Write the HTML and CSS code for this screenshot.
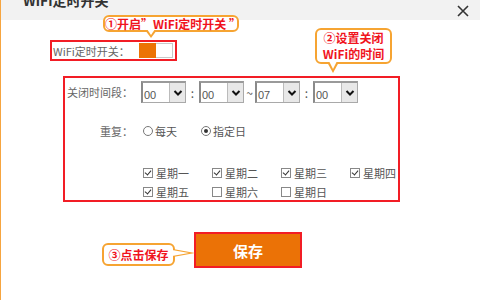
FILE: index.html
```html
<!DOCTYPE html>
<html lang="zh-CN">
<head>
    <meta charset="UTF-8">
    <title>WiFi定时开关</title>
    <link rel="stylesheet" href="styles.css">
</head>
<body>
    <div class="dialog">
        <!-- Tiêu đề hộp thoại -->
        <div class="dialog-head">
            <h1>WiFi定时开关</h1>
            <span class="close">
                <svg width="12" height="12" viewBox="0 0 12 12"><path d="M1 1 L11 11 M11 1 L1 11" stroke="#333" stroke-width="1.6" fill="none"/></svg>
            </span>
        </div>

        <div class="dialog-body">
            <!-- Công tắc -->
            <div class="switch-row mark">
                <span class="switch-label">WiFi定时开关：</span>
                <span class="toggle"></span>
            </div>

            <!-- Khung thời gian -->
            <div class="time-box mark">
                <div class="row">
                    <span class="label">关闭时间段：</span>
                    <div class="fake-select"><span>00</span><i class="arrow"><svg width="10" height="8" viewBox="0 0 10 8"><path d="M1.5 2 L5 5.5 L8.5 2" stroke="#111" stroke-width="2" fill="none"/></svg></i></div>
                    <span class="sep">:</span>
                    <div class="fake-select"><span>00</span><i class="arrow"><svg width="10" height="8" viewBox="0 0 10 8"><path d="M1.5 2 L5 5.5 L8.5 2" stroke="#111" stroke-width="2" fill="none"/></svg></i></div>
                    <span class="sep tilde">~</span>
                    <div class="fake-select"><span>07</span><i class="arrow"><svg width="10" height="8" viewBox="0 0 10 8"><path d="M1.5 2 L5 5.5 L8.5 2" stroke="#111" stroke-width="2" fill="none"/></svg></i></div>
                    <span class="sep">:</span>
                    <div class="fake-select"><span>00</span><i class="arrow"><svg width="10" height="8" viewBox="0 0 10 8"><path d="M1.5 2 L5 5.5 L8.5 2" stroke="#111" stroke-width="2" fill="none"/></svg></i></div>
                </div>

                <div class="row repeat">
                    <span class="label">重复：</span>
                    <span class="radio"><i class="dot"></i>每天</span>
                    <span class="radio on"><i class="dot"></i>指定日</span>
                </div>

                <div class="days">
                    <span class="check on"><i class="box"></i>星期一</span>
                    <span class="check on"><i class="box"></i>星期二</span>
                    <span class="check on"><i class="box"></i>星期三</span>
                    <span class="check on"><i class="box"></i>星期四</span>
                    <span class="check on"><i class="box"></i>星期五</span>
                    <span class="check"><i class="box"></i>星期六</span>
                    <span class="check"><i class="box"></i>星期日</span>
                </div>
            </div>

            <button class="save">保存</button>
        </div>

        <!-- Chú thích -->
        <div class="tip tip-1">①开启”WiFi定时开关 ”</div>
        <div class="tip tip-2">②设置关闭<br>WiFi的时间</div>
        <div class="tip tip-3">③点击保存</div>
    </div>
</body>
</html>
```

FILE: styles.css
```css
body {
    margin: 0;
    font-family: "Noto Sans CJK SC", "Liberation Sans", sans-serif;
    background: #fff;
}

.dialog {
    position: relative;
    width: 480px;
    height: 300px;
    box-sizing: border-box;
    border-left: 1px solid #f6a540;
    overflow: hidden;
}

/* Tiêu đề */
.dialog-head {
    display: flow-root;
    height: 20px;
    background: #f2f2f2;
}

.dialog-head h1 {
    margin: -10px 0 0 22px;
    font-size: 14px;
    line-height: 20px;
    color: #333;
    font-weight: bold;
}

.close {
    position: absolute;
    top: -2px;
    right: 11px;
}

/* Khung đỏ */
.mark {
    border: 2px solid #f21d25;
    box-sizing: border-box;
}

.switch-row {
    display: flex;
    align-items: center;
    width: 127px;
    height: 21px;
    margin: 20px 0 0 49px;
    padding-left: 1px;
}

.switch-label {
    font-size: 11px;
    color: #666;
}

.toggle {
    margin-left: auto;
    margin-right: 2px;
    width: 34px;
    height: 15px;
    box-sizing: border-box;
    border: 1px solid #c8c8c8;
    background: #fff;
    position: relative;
}

.toggle::before {
    content: "";
    position: absolute;
    left: -1px;
    top: -1px;
    width: 17px;
    height: 15px;
    background: #ec7304;
}

.time-box {
    width: 337px;
    height: 126px;
    margin: 15px 0 0 62px;
    padding-top: 3px;
}

.row {
    display: flex;
    align-items: center;
    height: 22px;
}

.label {
    width: 68px;
    margin-right: 8px;
    text-align: right;
    font-size: 11px;
    color: #666;
    white-space: nowrap;
}

.fake-select {
    display: flex;
    width: 45px;
    height: 22px;
    box-sizing: border-box;
    border: 1px solid #a9a9a9;
    border-left: 2px solid #8a8a8a;
    border-top: 2px solid #9a9a9a;
    background: #fff;
}

.fake-select span {
    flex: 1;
    font-family: "Liberation Sans", sans-serif;
    font-size: 11px;
    color: #555;
    padding: 5px 0 0 1px;
    line-height: 14px;
}

.arrow {
    width: 15px;
    display: flex;
    align-items: center;
    justify-content: center;
    background: #e8e8e8;
    border-left: 1px solid #bbb;
}

.sep {
    width: 13px;
    text-align: center;
    font-size: 12px;
    color: #555;
}

.tilde {
    width: 11px;
}

.repeat {
    height: 16px;
    margin-top: 20px;
}

.radio, .check {
    display: flex;
    align-items: center;
    font-size: 11px;
    color: #555;
}

.radio {
    margin-left: 2px;
}

.radio + .radio {
    margin-left: 24px;
}

.dot {
    width: 10px;
    height: 10px;
    box-sizing: border-box;
    border: 1px solid #777;
    border-radius: 50%;
    margin-right: 2px;
    position: relative;
}

.radio.on .dot::after {
    content: "";
    position: absolute;
    left: 2px;
    top: 2px;
    width: 4px;
    height: 4px;
    border-radius: 50%;
    background: #333;
}

.days {
    display: grid;
    grid-template-columns: repeat(4, 69px);
    grid-auto-rows: 16px;
    row-gap: 3px;
    margin: 26px 0 0 78px;
}

.box {
    width: 10px;
    height: 10px;
    box-sizing: border-box;
    border: 1px solid #888;
    margin-right: 3px;
    position: relative;
}

.check.on .box::after {
    content: "";
    position: absolute;
    left: 2px;
    top: 0px;
    width: 3px;
    height: 5px;
    border: solid #333;
    border-width: 0 1.5px 1.5px 0;
    transform: rotate(40deg);
}

/* Nút lưu */
.save {
    display: block;
    width: 108px;
    height: 36px;
    margin: 30px 0 0 193px;
    background: #eb7206;
    border: 2px solid #f21d25;
    color: #fff;
    font-family: "Noto Sans CJK SC", sans-serif;
    font-size: 15px;
    font-weight: bold;
    padding: 0;
}

/* Chú thích */
.tip {
    position: absolute;
    box-sizing: border-box;
    border: 2px solid #f6a432;
    border-radius: 6px;
    background: #fff;
    color: #f0141e;
    font-size: 12px;
    font-weight: bold;
    text-align: center;
    white-space: nowrap;
}

.tip::before, .tip::after {
    content: "";
    position: absolute;
    width: 0;
    height: 0;
    border-style: solid;
}

.tip-1 {
    left: 102px;
    top: 15px;
    width: 136px;
    height: 17px;
    line-height: 13px;
}

.tip-1::before {
    left: 40px;
    top: 100%;
    border-width: 8px 6px 0 6px;
    border-color: #f6a432 transparent transparent transparent;
}

.tip-1::after {
    left: 42px;
    top: calc(100% - 1px);
    border-width: 6px 4px 0 4px;
    border-color: #fff transparent transparent transparent;
}

.tip-2 {
    left: 314px;
    top: 28px;
    width: 77px;
    height: 36px;
    line-height: 16px;
}

.tip-2::before {
    left: 10px;
    top: 100%;
    border-width: 11px 6px 0 6px;
    border-color: #f6a432 transparent transparent transparent;
}

.tip-2::after {
    left: 12px;
    top: calc(100% - 1px);
    border-width: 8px 4px 0 4px;
    border-color: #fff transparent transparent transparent;
}

.tip-3 {
    left: 101px;
    top: 243px;
    width: 73px;
    height: 23px;
    line-height: 19px;
}

.tip-3::before {
    left: 100%;
    top: 4px;
    border-width: 4px 0 4px 22px;
    border-color: transparent transparent transparent #f6a432;
}

.tip-3::after {
    left: calc(100% - 1px);
    top: 5px;
    border-width: 3px 0 3px 17px;
    border-color: transparent transparent transparent #fff;
}
```
